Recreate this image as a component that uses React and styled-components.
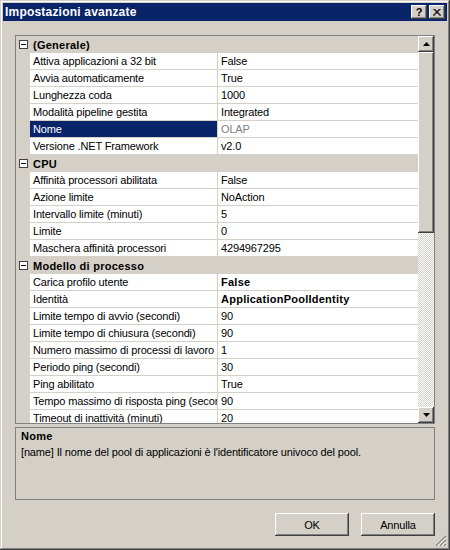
import React from "react";
import styled, { createGlobalStyle, css } from "styled-components";

const GlobalStyle = createGlobalStyle`
  html, body { margin: 0; padding: 0; background: #D4D0C8; }
  body { font-family: "Liberation Sans", Arial, sans-serif; font-size: 11px; color: #000; letter-spacing: -0.15px; }
  * { box-sizing: border-box; }
`;

const raised = css`
  background: #D4D0C8;
  box-shadow: inset -1px -1px #404040, inset 1px 1px #fff, inset -2px -2px #808080;
`;

const Window = styled.div`
  position: relative;
  width: 450px;
  height: 550px;
  padding: 3px;
  background: #D4D0C8;
  box-shadow: inset -1px -1px #404040, inset 1px 1px #D4D0C8, inset -2px -2px #808080, inset 2px 2px #fff;
  display: flex;
  flex-direction: column;
`;

const TitleBar = styled.div`
  height: 18px;
  background: #0A246A;
  display: flex;
  align-items: center;
  padding: 0 2px 0 2px;
  gap: 2px;
`;

const Title = styled.div`
  flex: 1;
  color: #fff;
  font-weight: bold;
  font-size: 12px;
  letter-spacing: 0.2px;
  white-space: nowrap;
`;

const CaptionButton = styled.div`
  ${raised};
  width: 16px;
  height: 14px;
  display: flex;
  align-items: center;
  justify-content: center;
  font-weight: bold;
  font-size: 11px;
  line-height: 14px;
  letter-spacing: 0;
`;

const Body = styled.div`
  flex: 1;
  display: flex;
  flex-direction: column;
  padding: 14px 12px 0;
`;

const Grid = styled.div`
  height: 389px;
  border: 1px solid #808080;
  display: flex;
  background: #fff;
`;

const Rows = styled.div`
  flex: 1;
  overflow: hidden;
`;

const CategoryRow = styled.div`
  display: flex;
  align-items: center;
  height: 17px;
  background: #D4D0C8;
  font-weight: bold;
  letter-spacing: 0.25px;
  white-space: nowrap;
`;

const MarginCol = styled.div`
  width: 14px;
  flex: none;
  align-self: stretch;
  background: #D4D0C8;
  display: flex;
  align-items: center;
  justify-content: center;
`;

const CategoryTitle = styled.div`
  padding-left: 3px;
`;

const Row = styled.div`
  display: flex;
  height: 17px;
  border-bottom: 1px solid #D4D0C8;
  background: #D4D0C8;
`;

const NameCell = styled.div`
  width: 188px;
  flex: none;
  border-right: 1px solid #D4D0C8;
  padding-left: 3px;
  line-height: 16px;
  white-space: nowrap;
  overflow: hidden;
  background: ${(p) => (p.$selected ? "#0A246A" : "#fff")};
  color: ${(p) => (p.$selected ? "#fff" : "#000")};
`;

const ValueCell = styled.div`
  flex: 1;
  padding-left: 3px;
  line-height: 16px;
  white-space: nowrap;
  overflow: hidden;
  background: #fff;
  color: ${(p) => (p.$dim ? "#808080" : "#000")};
  font-weight: ${(p) => (p.$bold ? "bold" : "normal")};
  letter-spacing: ${(p) => (p.$bold ? "0.25px" : "-0.15px")};
`;

const ScrollBar = styled.div`
  width: 16px;
  flex: none;
  display: flex;
  flex-direction: column;
`;

const ScrollButton = styled.div`
  ${raised};
  height: 16px;
  flex: none;
  display: flex;
  align-items: center;
  justify-content: center;
`;

const Thumb = styled.div`
  ${raised};
  height: 181px;
  flex: none;
`;

const Track = styled.div`
  flex: 1;
  background: repeating-conic-gradient(#fff 0% 25%, #D4D0C8 0% 50%) 0 0 / 2px 2px;
`;

const Description = styled.div`
  margin-top: 3px;
  height: 73px;
  border: 1px solid #808080;
  padding: 0 5px;
  line-height: 16px;
`;

const DescTitle = styled.div`
  font-weight: bold;
  letter-spacing: 0.25px;
`;

const ButtonRow = styled.div`
  margin-top: 13px;
  display: flex;
  justify-content: flex-end;
  gap: 12px;
`;

const PushButton = styled.div`
  ${raised};
  width: 74px;
  height: 23px;
  display: flex;
  align-items: center;
  justify-content: center;
`;

const Grip = styled.svg`
  position: absolute;
  right: 3px;
  bottom: 3px;
`;

const sections = [
  {
    title: "(Generale)",
    rows: [
      ["Attiva applicazioni a 32 bit", "False"],
      ["Avvia automaticamente", "True"],
      ["Lunghezza coda", "1000"],
      ["Modalità pipeline gestita", "Integrated"],
      ["Nome", "OLAP", { selected: true }],
      ["Versione .NET Framework", "v2.0"],
    ],
  },
  {
    title: "CPU",
    rows: [
      ["Affinità processori abilitata", "False"],
      ["Azione limite", "NoAction"],
      ["Intervallo limite (minuti)", "5"],
      ["Limite", "0"],
      ["Maschera affinità processori", "4294967295"],
    ],
  },
  {
    title: "Modello di processo",
    rows: [
      ["Carica profilo utente", "False", { bold: true }],
      ["Identità", "ApplicationPoolIdentity", { bold: true }],
      ["Limite tempo di avvio (secondi)", "90"],
      ["Limite tempo di chiusura (secondi)", "90"],
      ["Numero massimo di processi di lavoro", "1"],
      ["Periodo ping (secondi)", "30"],
      ["Ping abilitato", "True"],
      ["Tempo massimo di risposta ping (secondi)", "90"],
      ["Timeout di inattività (minuti)", "20"],
    ],
  },
];

const MinusBox = () => (
  <svg width="9" height="9" viewBox="0 0 9 9">
    <rect x="0.5" y="0.5" width="8" height="8" fill="#fff" stroke="#404040" />
    <line x1="2" y1="4.5" x2="7" y2="4.5" stroke="#000" />
  </svg>
);

const Arrow = ({ down }) => (
  <svg width="7" height="4" viewBox="0 0 7 4">
    {down ? <polygon points="0,0 7,0 3.5,4" fill="#000" /> : <polygon points="3.5,0 7,4 0,4" fill="#000" />}
  </svg>
);

const CloseGlyph = () => (
  <svg width="8" height="7" viewBox="0 0 8 7">
    <path d="M0.5 0 L7.5 7 M1.5 0 L8 6.5 M7.5 0 L0.5 7 M6.5 0 L0 6.5" stroke="#000" strokeWidth="1" fill="none" />
  </svg>
);

export default function App() {
  return (
    <>
      <GlobalStyle />
      <Window>
        <TitleBar>
          <Title>Impostazioni avanzate</Title>
          <CaptionButton>?</CaptionButton>
          <CaptionButton>
            <CloseGlyph />
          </CaptionButton>
        </TitleBar>
        <Body>
          <Grid>
            <Rows>
              {sections.map((s) => (
                <React.Fragment key={s.title}>
                  <CategoryRow>
                    <MarginCol>
                      <MinusBox />
                    </MarginCol>
                    <CategoryTitle>{s.title}</CategoryTitle>
                  </CategoryRow>
                  {s.rows.map(([name, value, opt = {}]) => (
                    <Row key={name}>
                      <MarginCol />
                      <NameCell $selected={opt.selected}>{name}</NameCell>
                      <ValueCell $dim={opt.selected} $bold={opt.bold}>
                        {value}
                      </ValueCell>
                    </Row>
                  ))}
                </React.Fragment>
              ))}
            </Rows>
            <ScrollBar>
              <ScrollButton>
                <Arrow />
              </ScrollButton>
              <Thumb />
              <Track />
              <ScrollButton>
                <Arrow down />
              </ScrollButton>
            </ScrollBar>
          </Grid>
          <Description>
            <DescTitle>Nome</DescTitle>
            <div>[name] Il nome del pool di applicazioni è l'identificatore univoco del pool.</div>
          </Description>
          <ButtonRow>
            <PushButton>OK</PushButton>
            <PushButton>Annulla</PushButton>
          </ButtonRow>
        </Body>
        <Grip width="12" height="12" viewBox="0 0 12 12">
          <path d="M11 1 L1 11 M11 5 L5 11 M11 9 L9 11" stroke="#808080" strokeWidth="1.2" />
          <path d="M11 2.5 L2.5 11 M11 6.5 L6.5 11 M11 10.5 L10.5 11" stroke="#fff" strokeWidth="1" />
        </Grip>
      </Window>
    </>
  );
}
